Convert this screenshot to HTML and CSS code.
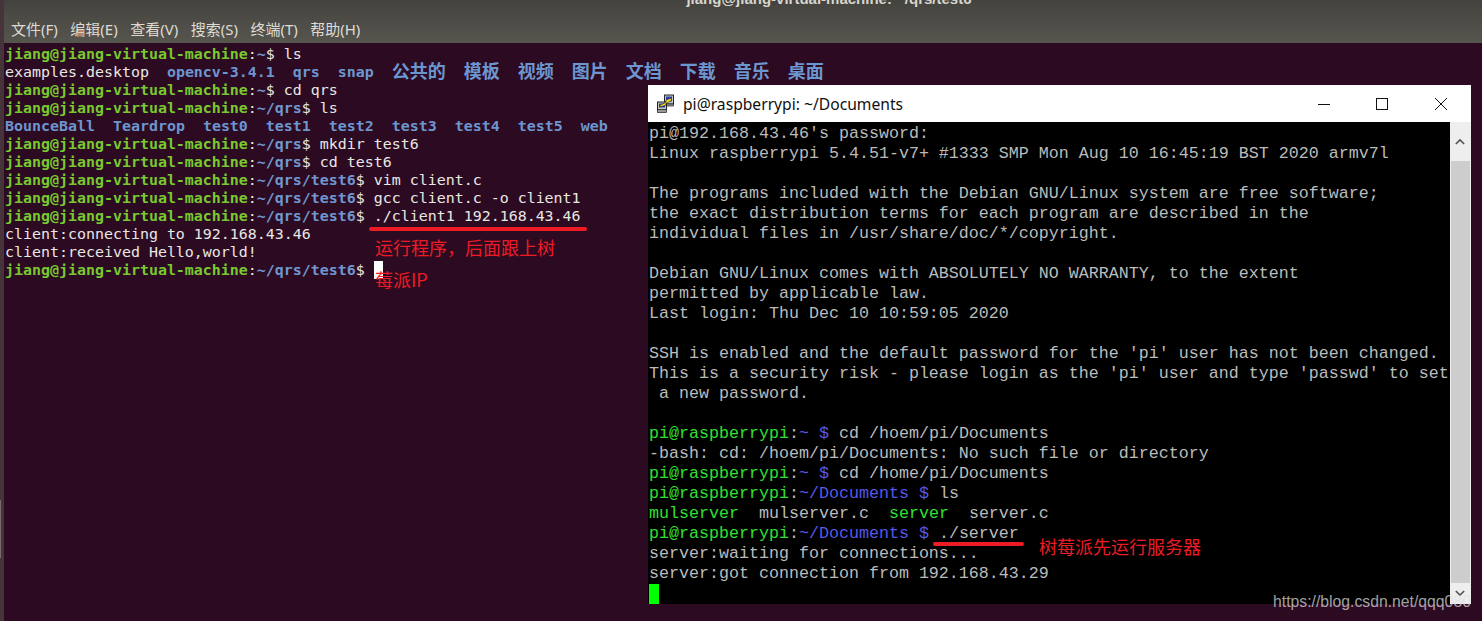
FILE: index.html
```html
<!DOCTYPE html>
<html lang="zh-CN">
<head>
<meta charset="utf-8">
<title>Terminal</title>
<link rel="stylesheet" href="styles.css">
</head>
<body>
<div class="ubuntu">
  <div class="titlebar"><span class="title">jiang@jiang-virtual-machine: ~/qrs/test6</span></div>
  <nav class="menubar">
    <span>文件(F)</span><span>编辑(E)</span><span>查看(V)</span><span>搜索(S)</span><span>终端(T)</span><span>帮助(H)</span>
  </nav>
  <pre class="term"><b class="g">jiang@jiang-virtual-machine</b>:<b class="b">~</b>$ ls
examples.desktop  <b class="d">opencv-3.4.1</b>  <b class="d">qrs</b>  <b class="d">snap</b>  <b class="d cjk">公共的</b>  <b class="d cjk">模板</b>  <b class="d cjk">视频</b>  <b class="d cjk">图片</b>  <b class="d cjk">文档</b>  <b class="d cjk">下载</b>  <b class="d cjk">音乐</b>  <b class="d cjk">桌面</b>
<b class="g">jiang@jiang-virtual-machine</b>:<b class="b">~</b>$ cd qrs
<b class="g">jiang@jiang-virtual-machine</b>:<b class="b">~/qrs</b>$ ls
<b class="d">BounceBall</b>  <b class="d">Teardrop</b>  <b class="d">test0</b>  <b class="d">test1</b>  <b class="d">test2</b>  <b class="d">test3</b>  <b class="d">test4</b>  <b class="d">test5</b>  <b class="d">web</b>
<b class="g">jiang@jiang-virtual-machine</b>:<b class="b">~/qrs</b>$ mkdir test6
<b class="g">jiang@jiang-virtual-machine</b>:<b class="b">~/qrs</b>$ cd test6
<b class="g">jiang@jiang-virtual-machine</b>:<b class="b">~/qrs/test6</b>$ vim client.c
<b class="g">jiang@jiang-virtual-machine</b>:<b class="b">~/qrs/test6</b>$ gcc client.c -o client1
<b class="g">jiang@jiang-virtual-machine</b>:<b class="b">~/qrs/test6</b>$ ./client1 192.168.43.46
client:connecting to 192.168.43.46
client:received Hello,world!
<b class="g">jiang@jiang-virtual-machine</b>:<b class="b">~/qrs/test6</b>$ <span class="cursor"> </span></pre>
</div>
<div class="edge-grip"></div>

<section class="putty">
  <header class="putty-bar">
    <svg class="putty-icon" viewBox="0 0 20 20" width="20" height="20" aria-hidden="true">
      <rect x="8.5" y="1" width="9" height="9" fill="#c8c8c8" stroke="#222"/>
      <rect x="10" y="2.5" width="6" height="5" fill="#2a3fb0"/>
      <rect x="8.5" y="10" width="9" height="2" fill="#9a9a9a" stroke="#222" stroke-width=".7"/>
      <rect x="1.5" y="8" width="9" height="8" fill="#c8c8c8" stroke="#222"/>
      <rect x="3" y="9.5" width="6" height="4" fill="#2a3fb0"/>
      <rect x="1.5" y="15.5" width="9" height="3" fill="#9a9a9a" stroke="#222" stroke-width=".7"/>
      <path d="M4 11 L10 8.5 L10 6 L15.5 4 L15.5 6.5 L10 9.5 L10 11 L4 13 Z" fill="#f4e020" stroke="#222" stroke-width=".6"/>
    </svg>
    <span class="putty-title">pi@raspberrypi: ~/Documents</span>
    <div class="win-btns">
      <svg viewBox="0 0 12 12" width="12" height="12" aria-hidden="true"><path d="M0 6.5H12" stroke="#111" fill="none"/></svg>
      <svg viewBox="0 0 12 12" width="12" height="12" aria-hidden="true"><rect x=".5" y=".5" width="11" height="11" stroke="#111" fill="none"/></svg>
      <svg class="win-close" viewBox="0 0 12 12" width="12" height="12" aria-hidden="true"><path d="M0 0L12 12M12 0L0 12" stroke="#111" fill="none"/></svg>
    </div>
  </header>
  <div class="putty-body">
    <pre class="console">pi@192.168.43.46's password:
Linux raspberrypi 5.4.51-v7+ #1333 SMP Mon Aug 10 16:45:19 BST 2020 armv7l

The programs included with the Debian GNU/Linux system are free software;
the exact distribution terms for each program are described in the
individual files in /usr/share/doc/*/copyright.

Debian GNU/Linux comes with ABSOLUTELY NO WARRANTY, to the extent
permitted by applicable law.
Last login: Thu Dec 10 10:59:05 2020

SSH is enabled and the default password for the 'pi' user has not been changed.
This is a security risk - please login as the 'pi' user and type 'passwd' to set
 a new password.

<i class="pg">pi@raspberrypi</i>:<i class="pb">~ $</i> cd /hoem/pi/Documents
-bash: cd: /hoem/pi/Documents: No such file or directory
<i class="pg">pi@raspberrypi</i>:<i class="pb">~ $</i> cd /home/pi/Documents
<i class="pg">pi@raspberrypi</i>:<i class="pb">~/Documents $</i> ls
<i class="pg">mulserver</i>  mulserver.c  <i class="pg">server</i>  server.c
<i class="pg">pi@raspberrypi</i>:<i class="pb">~/Documents $</i> ./server
server:waiting for connections...
server:got connection from 192.168.43.29
<span class="pcursor"> </span></pre>
    <div class="scrollbar">
      <div class="sb-btn"><svg viewBox="0 0 12 8" width="10" height="7" aria-hidden="true"><path d="M1 7L6 2L11 7" stroke="#555" stroke-width="2" fill="none"/></svg></div>
      <div class="sb-thumb"></div>
      <div class="sb-btn"><svg viewBox="0 0 12 8" width="10" height="7" aria-hidden="true"><path d="M1 1L6 6L11 1" stroke="#555" stroke-width="2" fill="none"/></svg></div>
    </div>
  </div>
</section>

<div class="mark line-a"></div>
<div class="mark line-b"></div>
<div class="note note-a">运行程序，后面跟上树</div>
<div class="note note-b">莓派IP</div>
<div class="note note-c">树莓派先运行服务器</div>
<div class="watermark">https://blog.csdn.net/qqq080</div>
</body>
</html>
```
FILE: styles.css
```css
* { box-sizing: border-box; }
html, body { margin: 0; height: 621px; overflow: hidden; }
body { background: #2c0a22; position: relative; }

.ubuntu { height: 621px; display: flex; flex-direction: column; border-left: 4px solid #46343a; }
.edge-grip { position: absolute; left: 0; top: 500px; width: 1px; height: 58px; background: #7a6a70; }
.titlebar {
  height: 16px; overflow: hidden; background: linear-gradient(#43423e, #4b4a45);
  display: flex; justify-content: center; align-items: flex-start;
}
.title {
  font: bold 15px/16px "Liberation Sans", "Noto Sans", sans-serif;
  color: #d8d5cc; transform: translateY(-9px); margin-left: 172px;
}
.menubar {
  height: 27px; background: linear-gradient(#4b4a45, #55544d);
  display: flex; gap: 12.5px; padding: 0 0 0 7px; align-items: center;
  font: 15px/27px "Noto Sans", "Noto Sans CJK SC", sans-serif; color: #dfdbd2;
}
.term {
  margin: 0; padding: 2px 0 0 1px; background: #2c0a22; flex: 1;
  font: 14.95px/18px "DejaVu Sans Mono", "Noto Sans CJK SC", monospace;
  color: #e8e8e3;
}
.term b { font-weight: bold; }
.g { color: #78c92f; }
.b { color: #6f97cf; }
.d { color: #6c96cf; }
.cjk { font-family: "Noto Sans CJK SC", sans-serif; font-size: 18px; line-height: 0; vertical-align: -1px; }
.cursor { display: inline-block; width: 9px; height: 18px; background: #fff; vertical-align: top; }

.putty { position: absolute; left: 648px; top: 85px; width: 823px; height: 519px; background: #fff; display: flex; flex-direction: column; }
.putty-bar { height: 37px; display: flex; align-items: center; padding: 0 0 0 8px; background: #fff; }
.putty-icon { flex: none; margin-right: 7px; }
.putty-title { font: 15.65px "Noto Sans", "Liberation Sans", sans-serif; color: #111; flex: 1; }
.win-btns { display: flex; gap: 46px; padding-right: 24px; align-items: center; }
.win-close { margin-left: 1px; }
.putty-body { flex: 1; display: flex; min-height: 0; }
.console {
  flex: 1; margin: 0; padding: 2px 0 0 1px; background: #000; overflow: hidden;
  font: 16.667px/20px "Liberation Mono", "Courier New", monospace; color: #bbb;
}
.console i { font-style: normal; }
.pg { color: #2fe02f; }
.pb { color: #5858e8; }
.pcursor { display: inline-block; width: 10px; height: 20px; background: #0f0; vertical-align: top; }
.scrollbar { width: 21px; flex: none; background: #eee; display: flex; flex-direction: column; padding-right: 1px; }
.sb-btn { height: 39px; display: flex; align-items: center; justify-content: center; }
.sb-btn:last-child { height: 21px; }
.sb-thumb { flex: 1; background: #cdcdcd; margin-left: 1px; }

.mark { position: absolute; height: 4px; background: #ed1c24; border-radius: 2px; }
.line-a { left: 369px; top: 227px; width: 218px; }
.line-b { left: 933px; top: 542px; width: 91px; }
.note { position: absolute; font: 18px/24px "Noto Sans CJK SC", sans-serif; color: #ed1c24; white-space: nowrap; }
.note-a { left: 375px; top: 235px; }
.note-b { left: 375px; top: 267px; }
.note-c { left: 1039px; top: 534px; }
.watermark { position: absolute; left: 1273px; top: 592px; font: 15.75px/20px "Liberation Sans", Arial, sans-serif; color: rgba(225,225,225,.72); white-space: nowrap; }
```
